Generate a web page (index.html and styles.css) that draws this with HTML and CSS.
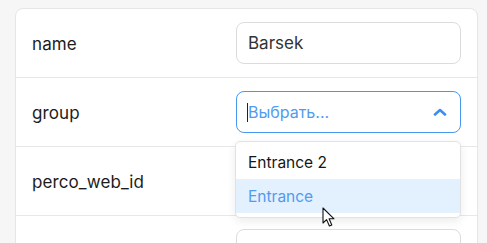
FILE: index.html
```html
<!DOCTYPE html>
<html lang="ru">
<head>
    <meta charset="UTF-8">
    <title>Person</title>
    <link rel="stylesheet" href="styles.css">
</head>
<body>

<div class="card">
    <div class="row">
        <div class="label">name</div>
        <div class="field">
            <div class="input">Barsek</div>
        </div>
    </div>

    <div class="row">
        <div class="label">group</div>
        <div class="field">
            <div class="input select">
                <span class="caret"></span>
                <span class="placeholder">Выбрать...</span>
                <svg class="chevron" width="14" height="8" viewBox="0 0 14 8">
                    <polyline points="2,6.5 7,2 12,6.5" fill="none" stroke="#3d8ef0" stroke-width="2.6" stroke-linecap="round" stroke-linejoin="round"/>
                </svg>
            </div>
            <!-- выпадающий список -->
            <div class="dropdown">
                <div class="option">Entrance 2</div>
                <div class="option active">Entrance</div>
                <svg class="pointer" width="14" height="22" viewBox="0 0 14 22">
                    <path d="M1 1 L1 16 L4.6 12.6 L7.4 19 L9.8 18 L7.1 11.8 L12 11.8 Z" fill="#fff" stroke="#111" stroke-width="1.1" stroke-linejoin="round"/>
                </svg>
            </div>
        </div>
    </div>

    <div class="row">
        <div class="label">perco_web_id</div>
        <div class="field">
            <div class="input"></div>
        </div>
    </div>

    <div class="row">
        <div class="label"></div>
        <div class="field">
            <div class="input"></div>
        </div>
    </div>
</div>

</body>
</html>
```

FILE: styles.css
```css
* {
    margin: 0;
    padding: 0;
    box-sizing: border-box;
    font-family: Inter, "Noto Sans", sans-serif;
}
body {
    background: #f6f6f6;
    padding: 8px 9px 0 15px;
    height: 243px;
    overflow: hidden;
}
.card {
    background: #fff;
    border: 1px solid #e6e6e6;
    border-radius: 8px;
}
.row {
    display: flex;
    align-items: center;
    justify-content: space-between;
    padding: 13px 16px;
    border-bottom: 1px solid #e8e8e8;
}
.label {
    font-size: 17px;
    letter-spacing: 0.1px;
    color: #1c1c1c;
    padding-top: 2px;
}
.field {
    position: relative;
    width: 225px;
}
.input {
    height: 42px;
    border: 1px solid #dcdcdc;
    border-radius: 8px;
    display: flex;
    align-items: center;
    padding: 0 11px;
    font-size: 17px;
    color: #333;
    white-space: nowrap;
    overflow: hidden;
}
.select {
    border-color: #4796f0;
    padding-left: 10px;
}
.caret {
    width: 1px;
    height: 19px;
    background: #222;
}
.placeholder {
    color: #4f9bf0;
    font-size: 16px;
    flex: 1;
}
.chevron {
    margin-right: 2px;
}
.dropdown {
    position: absolute;
    top: calc(100% + 8px);
    left: -1px;
    right: 0;
    background: #fff;
    border: 1px solid #e2e2e2;
    border-radius: 5px;
    box-shadow: 0 3px 10px rgba(0, 0, 0, 0.08);
    padding: 3px 0 4px;
    z-index: 2;
}
.option {
    height: 34px;
    display: flex;
    align-items: center;
    padding: 0 12px;
    font-size: 15.5px;
    color: #151515;
}
.option.active {
    background: #e3f0fd;
    color: #4f9bf0;
}
.pointer {
    position: absolute;
    left: 86px;
    top: 65px;
}
```
